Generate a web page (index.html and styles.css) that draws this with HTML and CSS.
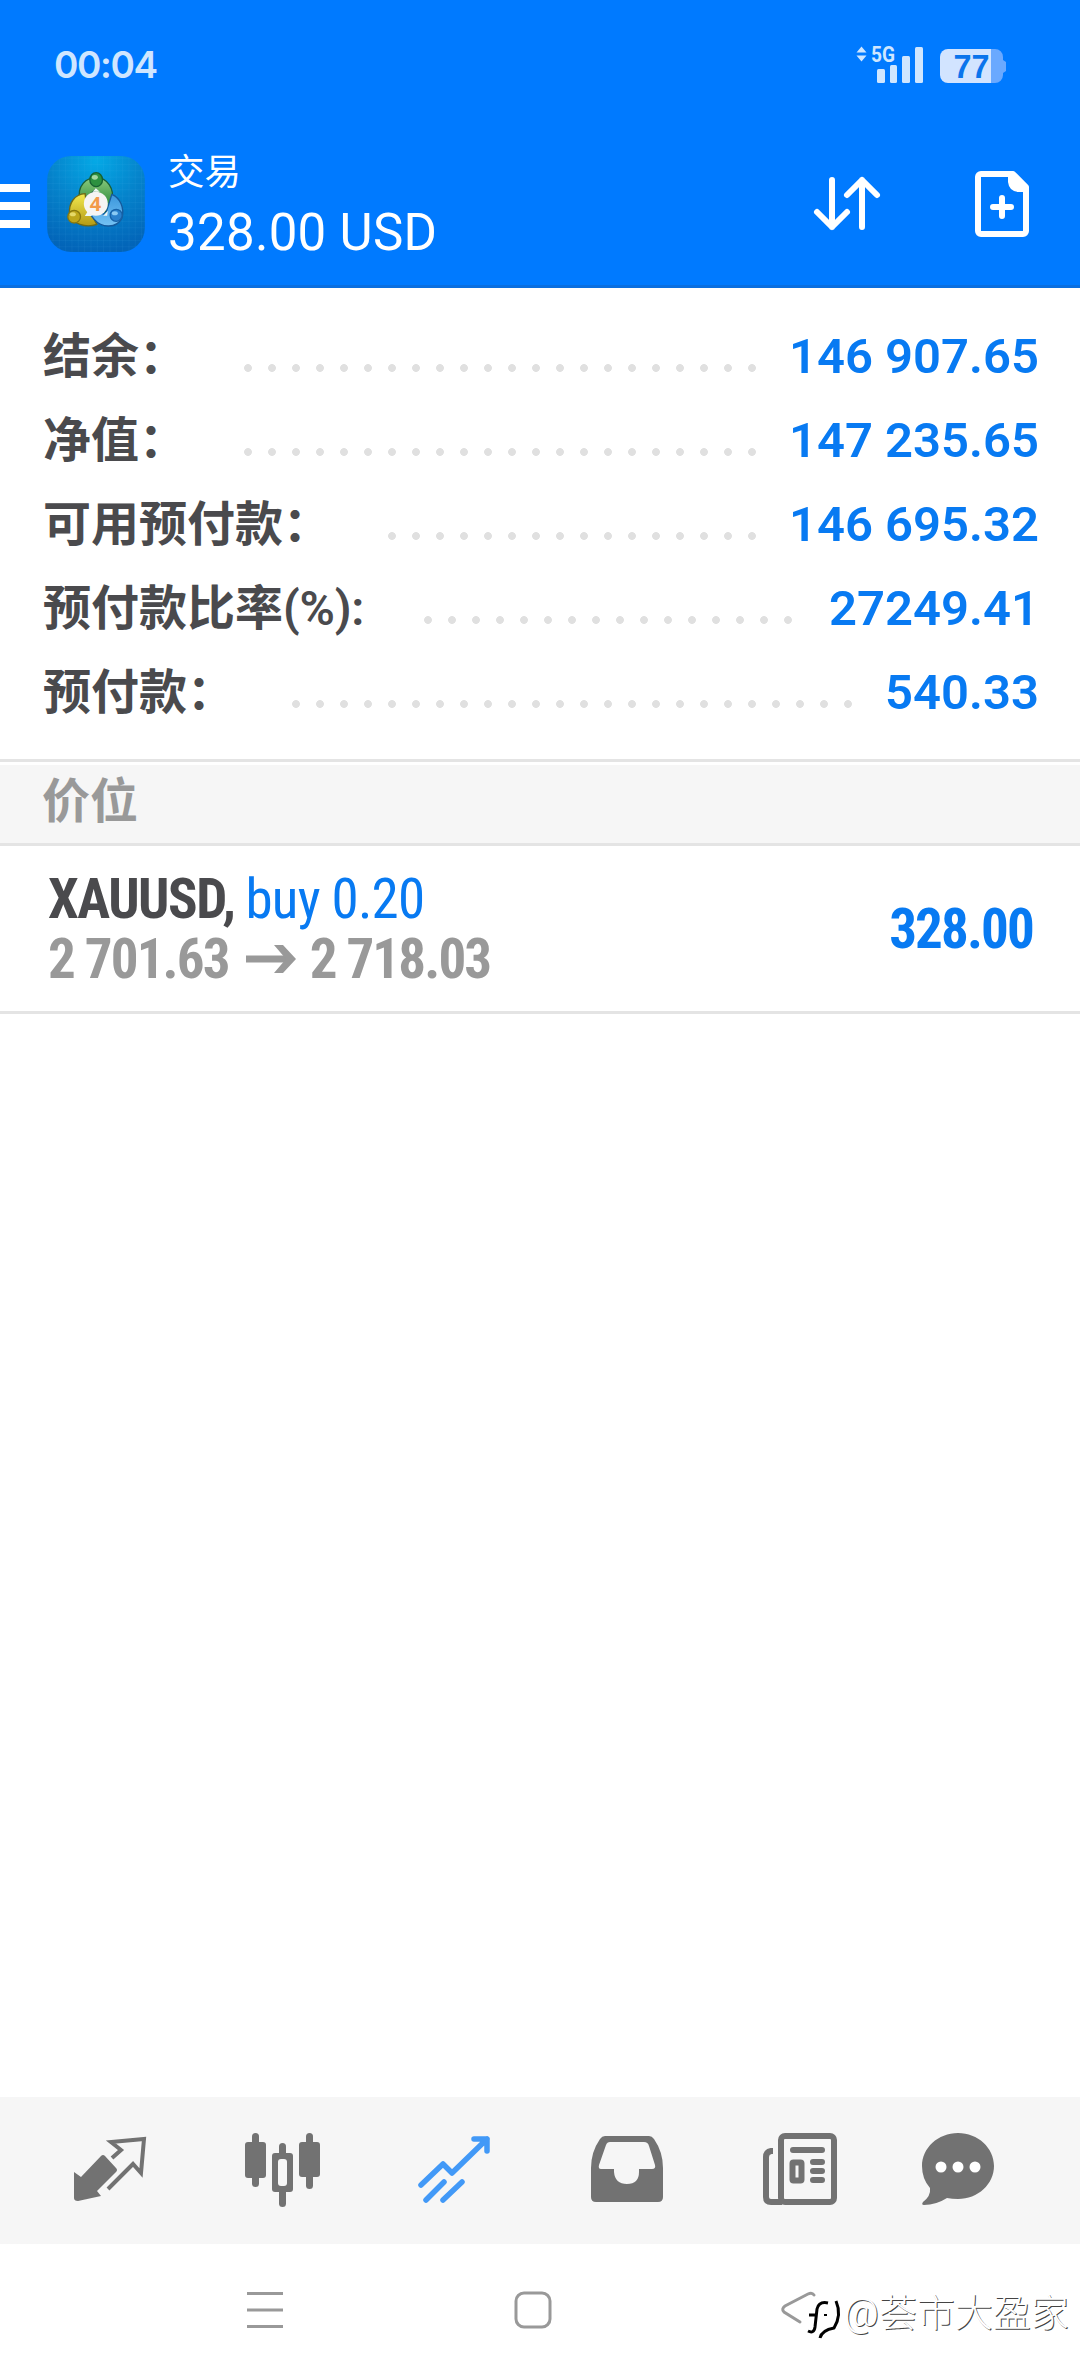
FILE: index.html
```html
<!DOCTYPE html>
<html lang="zh-CN">
<head>
<meta charset="utf-8">
<title>交易</title>
<link rel="stylesheet" href="styles.css">
</head>
<body>
<div class="screen">
  <header class="top">
    <div class="status">
      <span class="time">00:04</span>
      <div class="indicators">
        <svg class="updown" width="11" height="16" viewBox="0 0 11 16" fill="#cfe6ff"><path d="M5.500 0.500 10.500 6.500H0.500zM5.500 15.500 10.500 9.500H0.500z"/></svg>
        <svg class="signal" width="52" height="38" viewBox="0 0 52 38" fill="#cfe6ff">
          <text class="net" x="0" y="16" textLength="24" lengthAdjust="spacingAndGlyphs">5G</text>
          <rect x="6" y="23" width="8" height="14" rx="1.500"/><rect x="19" y="19" width="7" height="18" rx="1.500"/><rect x="31" y="10" width="8" height="27" rx="1.500"/><rect x="44" y="1" width="8" height="36" rx="1.500"/>
        </svg>
        <svg class="battery" width="66" height="34" viewBox="0 0 66 34">
          <path d="M51 0h4a8 8 0 0 1 8 8v3l3 2v9l-3 2v2a8 8 0 0 1-8 8h-4z" fill="#6aa9ff"/>
          <path d="M8 0h43v34H8a8 8 0 0 1-8-8V8a8 8 0 0 1 8-8z" fill="#d2e4ff"/>
          <text class="level" x="13.500" y="29" textLength="36" lengthAdjust="spacingAndGlyphs">77</text>
        </svg>
      </div>
    </div>
    <div class="appbar">
      <svg class="menu" width="30" height="44" viewBox="0 0 30 44" fill="#fff"><path d="M0 0h30v8H0zM0 18h30v8H0zM0 36h30v8H0z"/></svg>
      <svg class="logo" width="98" height="96" viewBox="22 33 293 288">
        <defs>
          <radialGradient id="bg" cx=".5" cy=".05" r=".95"><stop offset="0" stop-color="#04a9e6"/><stop offset=".5" stop-color="#0583cb"/><stop offset="1" stop-color="#0264b8"/></radialGradient>
          <pattern id="grid" width="19" height="19" patternUnits="userSpaceOnUse"><path d="M0 0H19M0 0V19" stroke="#5cc4f0" stroke-opacity=".2" stroke-width="2"/></pattern>
          <linearGradient id="green" x2="0" y2="1"><stop offset="0" stop-color="#8ccb7e"/><stop offset="1" stop-color="#187c2c"/></linearGradient>
          <linearGradient id="gold" x2="0" y2="1"><stop offset="0" stop-color="#f2e94f"/><stop offset="1" stop-color="#b39a15"/></linearGradient>
          <linearGradient id="sky" x2="0" y2="1"><stop offset="0" stop-color="#3a96dc"/><stop offset="1" stop-color="#74c2f4"/></linearGradient>
        </defs>
        <rect x="22" y="33" width="293" height="288" rx="72" fill="url(#bg)"/>
        <rect x="22" y="33" width="293" height="288" rx="72" fill="url(#grid)"/>
        <g stroke-width="4">
          <path d="M120 168C110 120 140 98 170 98s56 32 46 72c-3 18-12 26-22 31l-20-40-10-25-18 15z" fill="url(#green)" stroke="#1b5f35"/>
          <path d="M136 146c-32 2-50 28-47 62 8 28 48 42 82 30l-32-60z" fill="url(#gold)" stroke="#6f6a16"/>
          <path d="M216 148c25 10 39 42 30 72-16 30-60 30-82 4-8-8-14-17-17-28l50 12z" fill="url(#sky)" stroke="#155a9c"/>
          <path d="M135 213h22l-12-16zM202 212h-12l14-15zM158 140l10-10 12 10z" fill="#eef7f5" stroke="none"/>
          <ellipse cx="169" cy="104" rx="19" ry="21" fill="#2d9140" stroke="#176131"/>
          <circle cx="103" cy="215" r="19" fill="#bda61b" stroke="#87770f"/>
          <circle cx="229" cy="211" r="18" fill="#2a80cc" stroke="#1762a8"/>
          <ellipse cx="165" cy="97" rx="9" ry="7" fill="#a4d8a0" stroke="none"/>
          <ellipse cx="99" cy="208" rx="9" ry="6" fill="#e6d968" stroke="none"/>
          <ellipse cx="225" cy="205" rx="9" ry="6" fill="#8bcaf3" stroke="none"/>
        </g>
        <circle cx="168" cy="176" r="36" fill="#f6f4f3"/>
        <text class="four" x="150" y="197">4</text>
      </svg>
      <div class="heading">
        <span class="title">交易</span>
        <span class="total">328.00 USD</span>
      </div>
      <svg class="sort" width="68" height="56" viewBox="0 0 68 56" fill="none" stroke="#fff" stroke-width="6" stroke-linecap="round" stroke-linejoin="round"><path d="M19 4V51M4 36 19 51 34 36M49 51V4M34 19 49 4 64 19"/></svg>
      <svg class="add" width="54" height="66" viewBox="0 0 54 66" fill="none" stroke="#fff" stroke-width="6"><path d="M6 3H38L51 16V60a3 3 0 0 1-3 3H6a3 3 0 0 1-3-3V6a3 3 0 0 1 3-3z" stroke-linejoin="round"/><path d="M33 3V11q1 9 10 10H51V15L39 3z" fill="#fff" stroke="none"/><path d="M27 27V45M18 36H36" stroke-linecap="round"/></svg>
    </div>
  </header>

  <section class="account">
    <div class="line"><span class="name">结余：</span><i class="dots"></i><span class="value">146 907.65</span></div>
    <div class="line"><span class="name">净值：</span><i class="dots"></i><span class="value">147 235.65</span></div>
    <div class="line"><span class="name">可用预付款：</span><i class="dots"></i><span class="value">146 695.32</span></div>
    <div class="line"><span class="name">预付款比率<span class="unit">(%):</span></span><i class="dots"></i><span class="value">27249.41</span></div>
    <div class="line"><span class="name">预付款：</span><i class="dots"></i><span class="value">540.33</span></div>
  </section>

  <h2 class="section">价位</h2>

  <article class="position">
    <div class="deal">
      <div class="symbol"><b>XAUUSD,</b> <span class="side">buy 0.20</span></div>
      <div class="prices"><span>2 701.63</span><svg class="arrow" width="50" height="28" viewBox="0 0 50 28" fill="none" stroke="#999" stroke-width="7"><path d="M0 14H44"/><path d="M28 0h9l13 14-13 14h-9l12-14z" fill="#999" stroke="none"/></svg><span>2 718.03</span></div>
    </div>
    <span class="profit">328.00</span>
  </article>

  <main class="empty"></main>

  <nav class="tabs">
    <svg width="80" height="80" viewBox="0 0 80 80"><path d="M4 34 11 39 31 18Q33 16 35 18L46 30Q48 32 46 34L27 53 31 58 8 63Q4 63 4 60z" fill="#727272"/><path d="M42 20 51 12 41 4 74 1 71 35 63 26 38 51" fill="none" stroke="#727272" stroke-width="4"/></svg>
    <svg width="80" height="80" viewBox="0 0 80 80" fill="#727272"><rect x="10" y="-5" width="7" height="54" rx="3.500"/><rect x="64" y="-5" width="7" height="56" rx="3.500"/><rect x="3" y="4" width="21" height="36" rx="3"/><rect x="57" y="4" width="21" height="35" rx="3"/><rect x="37" y="5" width="7" height="64" rx="3.500"/><rect x="30" y="15" width="21" height="39" rx="3"/><rect x="36" y="21" width="9" height="27" rx="3" fill="#f6f6f6"/></svg>
    <svg width="80" height="80" viewBox="0 0 80 80" fill="none" stroke="#4299f7" stroke-width="5.500" stroke-linecap="round" stroke-linejoin="round"><path d="M7 47 29 26 38 35 73 1M60 1H73V13M12 62 30 44M29 62 48 44"/></svg>
    <svg width="80" height="80" viewBox="0 0 80 80"><path fill-rule="evenodd" d="M18-2H62Q65-2 67 1Q76 14 76 30V59Q76 64 71 64H9Q4 64 4 59V30Q4 14 13 1Q15-2 18-2zM23 4Q20 4 19 7L12 27Q11 31 14 31H27V34Q28 46 40 46T52 34V31H65Q69 31 68 27L62 8Q61 4 57 4z" fill="#727272"/></svg>
    <svg width="80" height="80" viewBox="0 0 80 80" fill="none" stroke="#727272" stroke-width="6"><rect x="21" y="-2" width="53" height="66" rx="4"/><path d="M13 13H11Q6 14 6 19V59Q6 64 11 64H22"/><path d="M33 12H62M53 24H62M53 33H62M53 42H62" stroke-linecap="round"/><rect x="32.500" y="24.500" width="9" height="18" rx="1"/></svg>
    <svg width="80" height="80" viewBox="0 0 80 80"><path d="M40-5C60-5 76 10 76 28S60 61 40 61Q34 61 29 60Q18 67 6 67Q3 67 5 64Q13 58 12 50Q4 41 4 28C4 10 20-5 40-5z" fill="#727272"/><g fill="#fff"><circle cx="23" cy="29" r="5.500"/><circle cx="40" cy="29" r="5.500"/><circle cx="57" cy="29" r="5.500"/></g></svg>
  </nav>

  <footer class="system">
    <svg width="36" height="38" viewBox="0 0 36 38" stroke="#999" stroke-width="3"><path d="M0 2.500H36M0 19H36M0 35.500H36"/></svg>
    <svg width="38" height="38" viewBox="0 0 38 38" fill="none" stroke="#999" stroke-width="3"><rect x="2" y="2" width="34" height="34" rx="8"/></svg>
    <svg width="36" height="38" viewBox="0 0 36 38" fill="none" stroke="#999" stroke-width="3" stroke-linecap="round"><path d="M33 4Q31 1 27 3L4 15Q0 18 3 21L19 31"/></svg>
    <div class="watermark">
      <svg width="34" height="44" viewBox="0 0 34 44" fill="none" stroke="#000" stroke-width="3"><path d="M20 6Q11 4 9 12L7 30Q6 37 0 34M1 18H8"/><path d="M28 4Q34 18 26 31Q14 33 12 41"/><path d="M16 18h3" stroke-width="2"/></svg>
      <span>@荟市大盈家</span>
    </div>
  </footer>
</div>
</body>
</html>
```
FILE: styles.css
```css
* { box-sizing: border-box; margin: 0; }
body { font-family: Roboto, "Noto Sans CJK SC", sans-serif; background: #fff; }
svg { display: block; overflow: visible; flex: none; }
.screen { width: 1080px; height: 2376px; display: flex; flex-direction: column; overflow: hidden; }

.top { height: 288px; background: #007aff; border-bottom: 3px solid #0a6fe0; display: flex; flex-direction: column; }
.status { height: 130px; display: flex; justify-content: space-between; padding: 46px 74px 0 54px; }
.time { font: 600 37px/38px Inter, sans-serif; letter-spacing: -1.4px; color: #cfe6ff; }
.indicators { display: flex; align-items: flex-start; }
.signal { margin-left: 4px; }
.battery { margin: 3px 0 0 17px; }
.net { font: 700 22px Roboto, sans-serif; }
.level { font: 700 33px "Liberation Sans", sans-serif; fill: #0a74ec; }
.appbar { height: 155px; display: flex; align-items: flex-start; }
.menu { margin-top: 54px; }
.logo { margin: 26px 0 0 17px; }
.four { font: 700 60px "Noto Sans", sans-serif; fill: #f29a4a; }
.heading { width: 668px; padding: 19px 0 0 23px; color: #fff; display: flex; flex-direction: column; }
.title { font-size: 36.5px; line-height: 48px; }
.total { font-size: 51px; line-height: 60px; margin-top: 6px; letter-spacing: .3px; white-space: nowrap; }
.sort { margin-top: 46px; }
.add { margin: 41px 0 0 94px; }

.account { height: 471px; padding: 27px 41px 0 43px; }
.line { height: 84px; display: flex; align-items: center; }
.name { font-size: 48px; font-weight: 700; line-height: 84px; color: #4a4a4d; white-space: nowrap; }
.unit { display: inline-block; width: 84px; font-weight: 600; letter-spacing: -.2px; }
.dots { flex: 1; height: 8px; margin: 22px 26px 0 57px; background: radial-gradient(circle at 4px 4px, #e0e0e0 3.5px, transparent 4.3px) 0 0 / 24px 8px repeat-x; }
.value { padding-bottom: 2px; font-size: 49px; font-weight: 600; color: #087af2; }

.section { height: 87px; border-top: 3px solid #e4e4e4; border-bottom: 3px solid #e4e4e4; background: linear-gradient(#fff 3px, #f6f6f6 3px); padding-left: 42px; font-size: 48px; line-height: 79px; color: #999; }
.position { height: 168px; border-bottom: 3px solid #e4e4e4; padding: 23px 47px 0 48px; display: flex; justify-content: space-between; font-family: "Roboto Condensed", Roboto, sans-serif; font-stretch: 75%; font-size: 55px; }
.symbol { height: 60px; line-height: 60px; color: #4a4a4d; letter-spacing: -1.5px; white-space: nowrap; }
.side { color: #087af2; letter-spacing: -.8px; }
.prices { display: flex; align-items: center; gap: 14px; height: 60px; line-height: 60px; font-weight: 700; letter-spacing: -1.85px; color: #999; }
.arrow { margin-left: 3px; }
.profit { font-weight: 700; line-height: 120px; letter-spacing: -1.85px; color: #087af2; }
.empty { flex: 1; }

.tabs { height: 147px; background: #f6f6f6; padding: 41px 0 0 70px; display: grid; grid-template-columns: 171.5px 172px 173px 173.5px 158px 80px; }
.system { height: 132px; padding: 47px 0 0 247px; display: flex; position: relative; }
.system > svg:nth-child(2) { margin-left: 231px; }
.system > svg:nth-child(3) { margin-left: 229px; }
.watermark { position: absolute; left: 808px; top: 53px; display: flex; }
.watermark span { margin: -3px 0 0 2px; font-size: 38px; font-weight: 300; line-height: 38px; color: #fff; text-shadow: 1px 1px 0 #444; white-space: nowrap; }
```
